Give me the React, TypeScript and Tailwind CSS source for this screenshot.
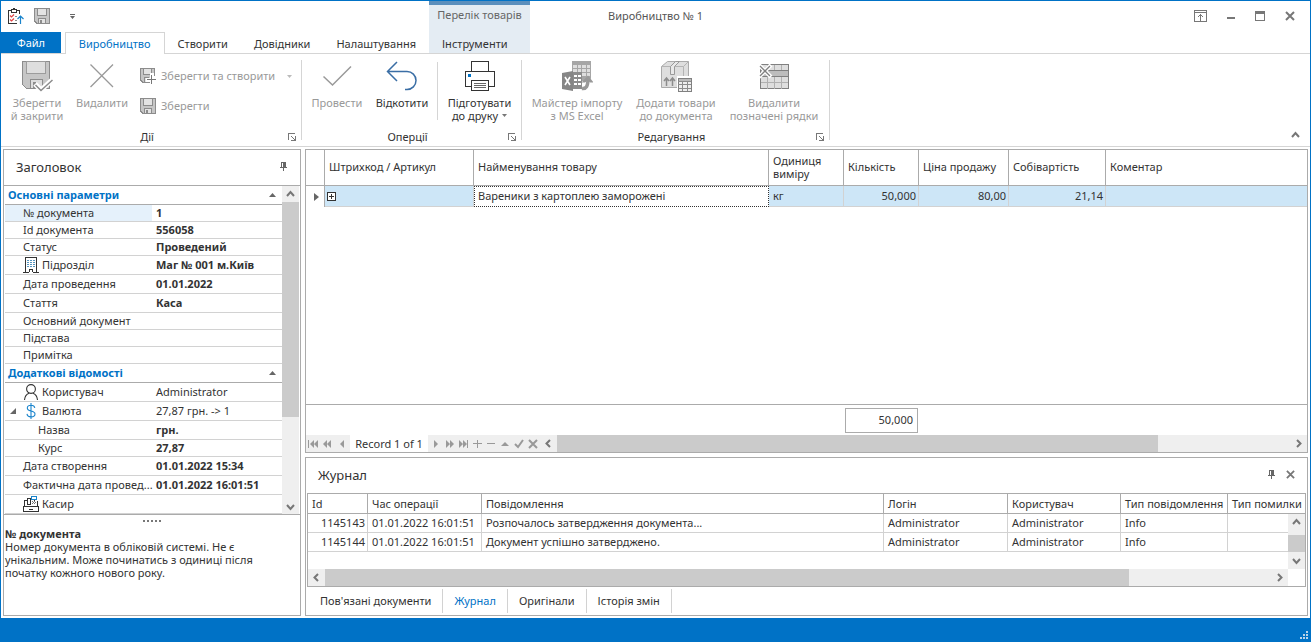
import React from 'react';
import clsx from 'clsx';

type Item = {
  name: string;
  value?: string;
  icon?: React.ReactNode;
  tall?: boolean;
  plain?: boolean;
  nested?: boolean;
  open?: boolean;
  active?: boolean;
};

const Floppy = () => (
  <svg width="16" height="16" viewBox="0 0 16 16" shapeRendering="crispEdges">
    <path d="M.5.5h15v15H3L.5 13z" fill="#c6c6c6" stroke="#8c8c8c" />
    <path d="M3.5.5h9v7h-9z" fill="#e3e3e3" stroke="#8c8c8c" />
    <path d="M4.5 10.5h7v5h-7z" fill="#e3e3e3" stroke="#8c8c8c" />
    <path d="M6 12h2v3H6z" fill="#8c8c8c" />
  </svg>
);

const FloppyPlus = () => (
  <svg width="16" height="16" viewBox="0 0 16 16" shapeRendering="crispEdges">
    <path d="M.5.5h14v14H3L.5 12z" fill="#c6c6c6" stroke="#8c8c8c" />
    <path d="M3.5.5h8v6h-8z" fill="#e3e3e3" stroke="#8c8c8c" />
    <path d="M4.5 9.5h4v5h-4z" fill="#e3e3e3" stroke="#8c8c8c" />
    <path d="M10 5h4v3h2v7h-2v1h-4v-2H6v-4h4z" fill="#fff" />
    <path d="M11 7h1v9h-1zM7 11h9v1H7z" fill="#777" />
  </svg>
);

const SaveCloseIcon = () => (
  <svg width="32" height="32" viewBox="0 0 32 32">
    <g shapeRendering="crispEdges">
      <path d="M1.5 1.5h27v27H5.5L1.5 24.5z" fill="#c6c6c6" stroke="#8c8c8c" />
      <path d="M5.5 1.5h19v12h-19z" fill="#dedede" stroke="#9c9c9c" />
      <path d="M9.5 19.5h12v9h-12z" fill="#dedede" stroke="#8c8c8c" />
      <path d="M12 22h3v6h-3z" fill="#8c8c8c" />
    </g>
    <path d="M14 24l6 6L32 19" fill="none" stroke="#fff" strokeWidth="5" />
    <path d="M14.5 25l5.5 5.5L31.5 20" fill="none" stroke="#8c8c8c" strokeWidth="1.5" />
  </svg>
);

const DeleteIcon = () => (
  <svg width="32" height="32" viewBox="0 0 32 32">
    <path d="M4.5 4.5L27 27M27 4.5L4.5 27" stroke="#999" strokeWidth="1.3" />
  </svg>
);

const CheckIcon = () => (
  <svg width="32" height="32" viewBox="0 0 32 32">
    <path d="M2.5 16.5l9 8.5L30 6.5" fill="none" stroke="#999" strokeWidth="1.5" />
  </svg>
);

const UndoIcon = () => (
  <svg width="32" height="32" viewBox="0 0 32 32">
    <path d="M11 2L1.5 11.5 11 21M2 11.5h19a9 9 0 0 1 0 18h-2" fill="none" stroke="#3a6ea5" strokeWidth="1.5" />
  </svg>
);

const PrinterIcon = () => (
  <svg width="32" height="32" viewBox="0 0 32 32" shapeRendering="crispEdges">
    <path d="M7.5 1.5h17v10h-17z" fill="#fff" stroke="#333" />
    <path d="M1.5 11.5h29v15h-29z" fill="#fff" stroke="#333" />
    <path d="M4 14h3v3H4z" fill="#0072c6" />
    <path d="M7.5 20.5h17v10h-17z" fill="#fff" stroke="#333" />
    <path d="M10 23h12v1H10zM10 25h12v1H10zM10 27h12v1H10z" fill="#666" />
  </svg>
);

const ExcelIcon = () => (
  <svg width="32" height="32" viewBox="0 0 32 32">
    <g shapeRendering="crispEdges">
      <path d="M11 1h19v20H11z" fill="#a6a6a6" />
      <path d="M12 5h4v3h-4zM17 5h3v3h-3zM21 5h4v3h-4zM26 5h3v3h-3zM12 9h4v3h-4zM17 9h3v3h-3zM21 9h4v3h-4zM26 9h3v3h-3zM21 13h4v3h-4zM26 13h3v3h-3z" fill="#dedede" />
      <path d="M12 12h9v17h-9z" fill="#8c8c8c" />
      <path d="M13 15h3v2h-3zM17 15h3v2h-3zM13 19h3v2h-3zM17 19h3v2h-3zM13 23h3v2h-3zM17 23h3v2h-3z" fill="#fff" />
    </g>
    <path d="M1 13l11-2v20L1 29z" fill="#868686" />
    <path d="M4 17l5 8M9 17l-5 8" stroke="#fff" strokeWidth="1.6" />
    <path d="M21 30c5 1 7-3 6.5-11" fill="none" stroke="#fff" strokeWidth="6" />
    <path d="M21 28.5c4 .5 6-2 6-10" fill="none" stroke="#999" strokeWidth="3.5" />
    <path d="M20.5 22.5L27 15.5l5.5 7H29l-2-2-3 2z" fill="#999" />
  </svg>
);

const BoxIcon = () => (
  <svg width="32" height="32" viewBox="0 0 32 32">
    <path d="M1.5 6.5l6-5h21v21l-5 5h-22z" fill="#dedede" stroke="#aaa" />
    <path d="M1.5 6.5h22v21M23.5 6.5l5-5" fill="none" stroke="#b4b4b4" />
    <path d="M10.5 6.5l5-5h4l-5 5v8h-4z" fill="#e8e8e8" stroke="#999" />
    <path d="M6.5 26v-8M12.5 26v-8M4 21l2.5-3L9 21M10 21l2.5-3 2.5 3" fill="none" stroke="#8c8c8c" strokeWidth="1.5" />
    <path d="M17 16h15v16H17z" fill="#fff" />
    <g shapeRendering="crispEdges">
      <path d="M18.5 18.5h13v13h-13z" fill="#eee" stroke="#808080" />
      <path d="M19 19h12v2H19z" fill="#bbb" />
      <path d="M18 21.5h13M18 24.5h13M18 28.5h13M22.5 21v10M27.5 21v10" stroke="#8c8c8c" />
    </g>
  </svg>
);

const RemoveRowsIcon = () => (
  <svg width="32" height="32" viewBox="0 0 32 32">
    <g shapeRendering="crispEdges">
      <path d="M2.5 4.5h28v24h-28z" fill="#dedede" stroke="#808080" />
      <path d="M9.5 5v5M16.5 5v5M23.5 5v5M9.5 17v12M16.5 17v12M23.5 17v12M3 22.5h27" stroke="#b0b0b0" />
      <path d="M2.5 10.5h28v6h-28z" fill="#bdbdbd" stroke="#808080" />
    </g>
    <path d="M1 5l12 12M13 5L1 17" stroke="#fff" strokeWidth="4" />
    <path d="M2 6l10 10M12 6L2 16" stroke="#808080" strokeWidth="1.3" />
  </svg>
);

const BuildingIcon = () => (
  <svg width="16" height="16" viewBox="0 0 16 16" shapeRendering="crispEdges">
    <path d="M2.5 15V.5h11V15M0 15.5h6M10 15.5h6M6.5 15v-3h3v3" fill="none" stroke="#333" />
    <path d="M4 3.5h2M7 3.5h2M10 3.5h2M4 5.5h2M7 5.5h2M10 5.5h2M4 7.5h2M7 7.5h2M10 7.5h2M4 9.5h2M7 9.5h2M10 9.5h2" stroke="#5596c0" />
  </svg>
);

const UserIcon = () => (
  <svg width="16" height="16" viewBox="0 0 16 16">
    <circle cx="8" cy="5" r="4.4" fill="none" stroke="#333" strokeWidth="1.1" />
    <path d="M1.5 16c.3-3.8 2.2-6 4.7-6.8M14.5 16c-.3-3.8-2.2-6-4.7-6.8" fill="none" stroke="#333" strokeWidth="1.1" />
  </svg>
);

const DollarIcon = () => (
  <svg width="16" height="16" viewBox="0 0 16 16">
    <path d="M11.8 4.8C11.5 3 10 2.2 8 2.2S4.3 3.2 4.3 5s1.5 2.5 3.7 3 4 1.2 4 3-1.7 2.9-4 2.9-3.8-1.2-4-3M8 0v16" fill="none" stroke="#1a84cc" strokeWidth="1.1" />
  </svg>
);

const CashIcon = () => (
  <svg width="16" height="16" viewBox="0 0 16 16" shapeRendering="crispEdges">
    <path d="M.5 10.5h15v5H.5zM1.5 10V4.5h3M4.5 8V2.5h3V8zM14.5 10V5M11 5V3" fill="none" stroke="#333" />
    <path d="M6 13h4v1H6z" fill="#333" />
    <path d="M9 5h1v1H9zM11 5h1v1h-1zM9 7h1v1H9zM11 7h1v1h-1zM10 6h1v1h-1zM12 6h1v1h-1z" fill="#777" />
    <path d="M8.5.5h5v3h-5z" fill="#fff" stroke="#1a84cc" />
  </svg>
);

const ClipboardIcon = () => (
  <svg width="16" height="16" viewBox="0 0 16 16">
    <g shapeRendering="crispEdges">
      <path d="M4 2.5H.5v13H9M8 2.5h3.5V6M3.5 4.5v-3h5v3z" fill="none" stroke="#333" />
      <path d="M5 0h2v1H5z" fill="#333" />
      <path d="M7 8h2v1H7zM7 12h2v1H7z" fill="#888" />
    </g>
    <path d="M2 7.5l1.5 1.5L6 6.5M2 11.5L3.5 13 6 10.5" fill="none" stroke="#e04343" strokeWidth="1.2" />
    <path d="M12.5 16V8M9.5 11l3-3 3 3" fill="none" stroke="#1a84cc" strokeWidth="1.2" />
  </svg>
);

const Pin = () => (
  <svg width="7" height="9" viewBox="0 0 7 9" shapeRendering="crispEdges" fill="#666">
    <path d="M1 0h5v5h1v1H4v3H3V6H0V5h1z" />
    <path d="M2 1h1v4H2z" fill="#fff" />
  </svg>
);

const Cross = ({ size = 10 }) => (
  <svg width={size} height={size} viewBox="0 0 10 10">
    <path d="M1 1l8 8M9 1L1 9" stroke="#777" strokeWidth="2" />
  </svg>
);

const chevrons = {
  up: 'M1 6l3.5-4L8 6',
  down: 'M1 3l3.5 4L8 3',
  left: 'M6 1L2.5 4.5 6 8',
  right: 'M3 1l3.5 3.5L3 8',
};

const Chevron = ({ dir }: { dir: keyof typeof chevrons }) => (
  <svg width="9" height="9" viewBox="0 0 9 9">
    <path d={chevrons[dir]} fill="none" stroke="#777" strokeWidth="2" />
  </svg>
);

const Caret = ({ color, className }: { color: string; className?: string }) => (
  <svg className={className} width="5" height="3" viewBox="0 0 5 3">
    <path d="M0 0h5L2.5 3z" fill={color} />
  </svg>
);

const items: Item[] = [
  { name: '№ документа', value: '1', active: true },
  { name: 'Id документа', value: '556058' },
  { name: 'Статус', value: 'Проведений' },
  { name: 'Підрозділ', value: 'Маг № 001 м.Київ', icon: <BuildingIcon />, tall: true },
  { name: 'Дата проведення', value: '01.01.2022', tall: true },
  { name: 'Стаття', value: 'Каса', tall: true },
  { name: 'Основний документ' },
  { name: 'Підстава' },
  { name: 'Примітка' },
];

const extraItems: Item[] = [
  { name: 'Користувач', value: 'Administrator', icon: <UserIcon />, tall: true, plain: true },
  { name: 'Валюта', value: '27,87 грн. -> 1', icon: <DollarIcon />, tall: true, plain: true, open: true },
  { name: 'Назва', value: 'грн.', tall: true, nested: true },
  { name: 'Курс', value: '27,87', nested: true },
  { name: 'Дата створення', value: '01.01.2022 15:34', tall: true },
  { name: 'Фактична дата провед...', value: '01.01.2022 16:01:51', tall: true },
  { name: 'Касир', icon: <CashIcon />, tall: true },
];

const log = [
  { id: '1145143', time: '01.01.2022 16:01:51', text: 'Розпочалось затвердження документа...' },
  { id: '1145144', time: '01.01.2022 16:01:51', text: 'Документ успішно затверджено.' },
];

const tabs = ['Створити', 'Довідники', 'Налаштування'];

const RibbonButton = ({ icon, lines, width, enabled, caret }: {
  icon: React.ReactNode; lines: string[]; width: string; enabled?: boolean; caret?: boolean;
}) => (
  <button className={clsx('flex shrink-0 flex-col items-center gap-1 leading-[13px]', width, enabled ? 'text-[#333]' : 'text-[#999]')}>
    {icon}
    <span className="whitespace-nowrap">
      {lines.map((line, i) => (
        <span key={line} className="flex items-center justify-center gap-1">
          {line}
          {caret && i === lines.length - 1 && <Caret color="#777" />}
        </span>
      ))}
    </span>
  </button>
);

const RibbonGroup = ({ title, width, children }: { title: string; width: string; children: React.ReactNode }) => (
  <section className={clsx('my-[6px] flex h-20 shrink-0 flex-col border-r border-[#d5d5d5]', width)}>
    <div className="flex flex-1">{children}</div>
    <div className="flex h-[6px] items-center pr-[5px] pl-[5px]">
      <span className="flex-1 text-center text-[#333]">{title}</span>
      <button aria-label={title}>
        <svg width="8" height="8" viewBox="0 0 8 8" shapeRendering="crispEdges">
          <path d="M.5 7V.5H7M7.5 3v4.5H3M3 3l4 4" fill="none" stroke="#777" />
        </svg>
      </button>
    </div>
  </section>
);

const PropertyRow = ({ item }: { item: Item }) => (
  <tr className={item.tall ? 'h-[19px]' : 'h-[17px]'}>
    <th scope="row" className={clsx('border-b border-[#d2d2d2] p-0 text-left font-normal', item.active && 'bg-[#e5f1fb]')}>
      <div className={clsx('flex h-4 items-center whitespace-nowrap', item.nested ? 'pl-[33px]' : item.open ? 'pl-[5px]' : 'pl-[18px]')}>
        {item.open && (
          <svg className="mr-[7px]" width="6" height="6" viewBox="0 0 6 6"><path d="M6 0v6H0z" fill="#666" /></svg>
        )}
        {item.icon && <span className="mr-[3px]">{item.icon}</span>}
        {item.name}
      </div>
    </th>
    <td className={clsx('border-b border-[#d2d2d2] p-0 pl-1 leading-4', !item.plain && 'font-bold')}>{item.value}</td>
  </tr>
);

const PropertyGroup = ({ title, rows }: { title: string; rows: Item[] }) => (
  <tbody>
    <tr className="h-[19px]">
      <th colSpan={2} className="border-b border-[#ababab] p-0 text-left text-[#0072c6]">
        <button className="flex w-full items-center justify-between pr-[6px] pl-[3px] leading-4 font-bold">
          {title}
          <svg width="7" height="4" viewBox="0 0 7 4"><path d="M0 4h7L3.5 0z" fill="#666" /></svg>
        </button>
      </th>
    </tr>
    {rows.map(item => <PropertyRow key={item.name} item={item} />)}
  </tbody>
);

const Sidebar = () => (
  <aside className="flex w-[298px] shrink-0 flex-col border border-[#ababab]">
    <header className="flex h-9 items-center justify-between border-b border-[#ababab] pr-[13px] pb-[2px] pl-3">
      <h2 className="text-[13px]">Заголовок</h2>
      <button aria-label="Закріпити"><Pin /></button>
    </header>
    <div className="flex border-b border-[#ababab] pl-px">
      <table className="w-[277px] table-fixed border-separate border-spacing-0">
        <colgroup>
          <col className="w-[147px]" />
          <col />
        </colgroup>
        <PropertyGroup title="Основні параметри" rows={items} />
        <PropertyGroup title="Додаткові відомості" rows={extraItems} />
      </table>
      <div className="mr-px flex flex-1 flex-col bg-[#efefef]">
        <button aria-label="Вгору" className="grid h-4 place-items-center"><Chevron dir="up" /></button>
        <div className="h-[215px] bg-[#cbcbcb]" />
        <button aria-label="Вниз" className="mt-auto grid h-4 place-items-center"><Chevron dir="down" /></button>
      </div>
    </div>
    <div className="flex h-3 items-center justify-center gap-[2px]">
      {[0, 1, 2, 3, 4].map(i => <span key={i} className="size-[2px] bg-[#777]" />)}
    </div>
    <div className="pr-8 pl-px leading-[13px]">
      <h3 className="font-bold">№ документа</h3>
      <p>Номер документа в обліковій системі. Не є унікальним. Може починатись з одиниці після початку кожного нового року.</p>
    </div>
  </aside>
);

const NavButton = ({ d, label, stroke }: { d: string; label: string; stroke?: boolean }) => (
  <button aria-label={label} className="grid w-[14px] place-items-center">
    <svg width="12" height="10" viewBox="0 0 12 10">
      <path d={d} fill={stroke ? 'none' : '#999'} stroke={stroke ? '#999' : 'none'} strokeWidth="2" />
    </svg>
  </button>
);

const headCell = 'border-r border-b border-[#ababab] p-0 px-1 pb-[2px] text-left font-normal leading-[13px]';
const rowCell = 'border-r border-b border-[#d2d2d2] bg-[#cde6f7] p-0 px-1';
const numCell = 'border-r border-b border-[#d2d2d2] bg-[#cde6f7] p-0 pr-[2px] text-right';

const ProductGrid = () => (
  <section className="flex flex-1 flex-col border border-[#ababab]">
    <table className="w-full table-fixed border-separate border-spacing-0">
      <colgroup>
        <col className="w-[19px]" />
        <col className="w-[149px]" />
        <col className="w-[295px]" />
        <col className="w-[75px]" />
        <col className="w-[75px]" />
        <col className="w-[90px]" />
        <col className="w-[97px]" />
        <col />
      </colgroup>
      <thead>
        <tr className="h-9">
          <th className={headCell} />
          <th className={headCell}>Штрихкод / Артикул</th>
          <th className={headCell}>Найменування товару</th>
          <th className={headCell}>Одиниця виміру</th>
          <th className={headCell}>Кількість</th>
          <th className={clsx(headCell, 'whitespace-nowrap')}>Ціна продажу</th>
          <th className={headCell}>Собівартість</th>
          <th className="border-b border-[#ababab] p-0 px-1 pb-[2px] text-left leading-[13px] font-normal">Коментар</th>
        </tr>
      </thead>
      <tbody>
        <tr className="h-[21px]">
          <td className="border-r border-[#ababab] p-0 pl-2">
            <svg width="5" height="8" viewBox="0 0 5 8"><path d="M0 0l5 4-5 4z" fill="#666" /></svg>
          </td>
          <td className="border-r border-b border-[#d2d2d2] bg-[#cde6f7] p-0 pl-[2px]">
            <button aria-label="Розгорнути" className="block">
              <svg width="9" height="9" viewBox="0 0 9 9" shapeRendering="crispEdges">
                <path d="M.5.5h8v8h-8z" fill="#fff" stroke="#333" />
                <path d="M4 2h1v5H4zM2 4h5v1H2z" fill="#333" />
              </svg>
            </button>
          </td>
          <td className="border border-dotted border-[#333] p-0 px-[3px] pb-[2px] leading-4">Вареники з картоплею заморожені</td>
          <td className={rowCell}>кг</td>
          <td className={numCell}>50,000</td>
          <td className={numCell}>80,00</td>
          <td className={numCell}>21,14</td>
          <td className="border-b border-[#d2d2d2] bg-[#cde6f7] p-0" />
        </tr>
      </tbody>
    </table>
    <div className="mt-auto flex h-[31px] items-start border-t border-[#ababab] pt-[3px] pl-[539px]">
      <output className="w-[73px] border border-[#ababab] pr-1 pb-[2px] text-right leading-[21px]">50,000</output>
    </div>
    <div className="flex h-[17px] bg-[#efefef]">
      <div className="flex items-stretch">
        <NavButton label="Перший" d="M1 1h1v8H1zM7 1v8L3 5zM11 1v8L7 5z" />
        <NavButton label="Попередня сторінка" d="M6 1v8L2 5zM10 1v8L6 5z" />
        <NavButton label="Попередній" d="M9 1v8L5 5z" />
      </div>
      <span className="ml-[2px] w-[78px] bg-white text-center leading-[17px]">Record 1 of 1</span>
      <div className="flex items-stretch">
        <NavButton label="Наступний" d="M5 1v8l4-4z" />
        <NavButton label="Наступна сторінка" d="M3 1v8l4-4zM7 1v8l4-4z" />
        <NavButton label="Останній" d="M2 1v8l4-4zM6 1v8l4-4zM10 1h1v8h-1z" />
        <NavButton label="Додати" d="M6 1h1v8H6zM2 4h9v1H2z" />
        <NavButton label="Вилучити" d="M2 4h8v1H2z" />
        <NavButton label="Змінити" d="M2 7h8L6 3z" />
        <NavButton label="Застосувати" stroke d="M2 5l3 3 5-7" />
        <NavButton label="Скасувати" stroke d="M2 1l8 8M10 1L2 9" />
      </div>
      <button aria-label="Ліворуч" className="grid w-[17px] place-items-center"><Chevron dir="left" /></button>
      <div className="flex flex-1"><div className="w-[82%] bg-[#cbcbcb]" /></div>
      <button aria-label="Праворуч" className="grid w-[17px] place-items-center"><Chevron dir="right" /></button>
    </div>
  </section>
);

const logHead = 'h-5 border-r border-b border-[#ababab] p-0 px-1 text-left font-normal';
const logCell = 'h-[19px] border-r border-b border-[#d2d2d2] p-0 px-1 leading-4';

const Journal = () => (
  <section className="flex flex-col border border-[#ababab]">
    <header className="flex h-[35px] items-center justify-between pr-3 pb-[2px] pl-3">
      <h2 className="text-[13px]">Журнал</h2>
      <div className="flex items-center gap-[11px]">
        <button aria-label="Закріпити"><Pin /></button>
        <button aria-label="Закрити"><Cross size={9} /></button>
      </div>
    </header>
    <div className="relative mx-px border border-[#ababab]">
      <table className="w-full table-fixed border-separate border-spacing-0 whitespace-nowrap">
        <colgroup>
          <col className="w-[60px]" />
          <col className="w-[114px]" />
          <col />
          <col className="w-[124px]" />
          <col className="w-[113px]" />
          <col className="w-[107px]" />
          <col className="w-[77px]" />
        </colgroup>
        <thead>
          <tr>
            <th className={logHead}>Id</th>
            <th className={logHead}>Час операції</th>
            <th className={logHead}>Повідомлення</th>
            <th className={logHead}>Логін</th>
            <th className={logHead}>Користувач</th>
            <th className={logHead}>Тип повідомлення</th>
            <th className="border-b border-[#ababab] p-0 pl-1 text-left font-normal">Тип помилки</th>
          </tr>
        </thead>
        <tbody>
          {log.map(row => (
            <tr key={row.id}>
              <td className="h-[19px] border-r border-b border-[#d2d2d2] p-0 pr-[2px] text-right leading-4">{row.id}</td>
              <td className={logCell}>{row.time}</td>
              <td className={logCell}>{row.text}</td>
              <td className={logCell}>Administrator</td>
              <td className={logCell}>Administrator</td>
              <td className={logCell}>Info</td>
              <td className="border-b border-[#d2d2d2] p-0" />
            </tr>
          ))}
        </tbody>
      </table>
      <div className="absolute top-5 right-0 bottom-[17px] flex w-[17px] flex-col bg-[#efefef]">
        <button aria-label="Вгору" className="grid h-[17px] place-items-center"><Chevron dir="up" /></button>
        <div className="mt-1 h-[17px] bg-[#cbcbcb]" />
        <button aria-label="Вниз" className="grid h-[17px] place-items-center"><Chevron dir="down" /></button>
      </div>
      <div className="mt-[17px] mr-[17px] flex h-[17px] bg-[#efefef]">
        <button aria-label="Ліворуч" className="grid w-[17px] place-items-center"><Chevron dir="left" /></button>
        <div className="flex flex-1"><div className="w-[85%] bg-[#cbcbcb]" /></div>
        <button aria-label="Праворуч" className="grid w-[17px] place-items-center"><Chevron dir="right" /></button>
      </div>
    </div>
    <nav className="flex py-[2px] pl-[3px] leading-6">
      {["Пов'язані документи", 'Журнал', 'Оригінали', 'Історія змін'].map(tab => (
        <button key={tab} className={clsx('border-r border-[#d2d2d2] px-[11px]', tab === 'Журнал' && 'text-[#0072c6]')}>{tab}</button>
      ))}
    </nav>
  </section>
);

export default function App() {
  return (
    <div className="flex min-h-screen flex-col border-x border-t border-[#0072c6] bg-white font-['Noto_Sans','Open_Sans',sans-serif] text-[11px] leading-4 text-[#333]">
      <header>
        <div className="grid h-[31px] grid-cols-[1fr_auto_1fr]">
          <div className="flex">
            <div className="flex w-[428px] items-center pb-px pl-[7px]">
              <ClipboardIcon />
              <button aria-label="Зберегти" className="ml-[10px]"><Floppy /></button>
              <button aria-label="Налаштувати панель" className="ml-5">
                <svg width="5" height="5" viewBox="0 0 5 5" fill="#666"><path d="M0 0h5v1H0zM0 2h5L2.5 5z" /></svg>
              </button>
            </div>
            <div className="w-[101px] border-t-4 border-[#5b8fbd] bg-[#e4ecf3] text-center leading-5 text-[#666]">Перелік товарів</div>
          </div>
          <h1 className="leading-[29px] text-[#555]">Виробництво № 1</h1>
          <div className="flex items-center justify-end gap-5 pr-[15px] pb-px">
            <button aria-label="Стрічка">
              <svg width="13" height="12" viewBox="0 0 13 12" shapeRendering="crispEdges">
                <path d="M.5.5h12v11H.5zM1 2.5h11M6.5 4v7M4 6.5h1M8 6.5h1M5 5.5h3" fill="none" stroke="#777" />
              </svg>
            </button>
            <button aria-label="Згорнути"><span className="mt-1 block h-[2px] w-2 bg-[#777]" /></button>
            <button aria-label="Розгорнути"><span className="block h-[10px] w-[10px] border border-t-[3px] border-[#777]" /></button>
            <button aria-label="Закрити"><Cross /></button>
          </div>
        </div>
        <nav className="flex h-[22px] border-b border-[#d5d5d5] leading-5">
          <div className="flex w-[428px] shrink-0">
            <button className="w-[62px] bg-[#0072c6] text-white">Файл</button>
            <button className="-mb-px ml-1 border border-b-0 border-[#d5d5d5] bg-white px-[13px] text-[#0072c6]">Виробництво</button>
            {tabs.map(tab => <button key={tab} className="px-[13px] pt-[2px]">{tab}</button>)}
          </div>
          <button className="w-[101px] bg-[#e4ecf3] pt-[2px] pl-[13px] text-left">Інструменти</button>
        </nav>
      </header>

      <div className="flex border-b border-[#d5d5d5]">
        <RibbonGroup title="Дії" width="w-[301px]">
          <div className="flex pl-1">
            <RibbonButton icon={<SaveCloseIcon />} lines={['Зберегти', 'й закрити']} width="w-16" />
            <RibbonButton icon={<DeleteIcon />} lines={['Видалити']} width="w-[66px]" />
          </div>
          <div className="flex flex-1 flex-col pt-px pl-[5px] text-[#999]">
            <button className="flex h-[30px] items-center gap-[5px] pr-[9px]">
              <FloppyPlus />
              Зберегти та створити
              <Caret color="#bbb" className="ml-auto" />
            </button>
            <button className="flex h-[30px] items-center gap-[5px]"><Floppy />Зберегти</button>
          </div>
        </RibbonGroup>
        <RibbonGroup title="Оперції" width="w-[220px]">
          <div className="flex pl-[3px]">
            <RibbonButton icon={<CheckIcon />} lines={['Провести']} width="w-16" />
            <RibbonButton icon={<UndoIcon />} lines={['Відкотити']} width="w-[66px]" enabled />
          </div>
          <div className="mt-[2px] mb-[14px] ml-[2px] border-l border-[#d5d5d5]" />
          <RibbonButton icon={<PrinterIcon />} lines={['Підготувати', 'до друку']} width="w-[83px]" enabled caret />
        </RibbonGroup>
        <RibbonGroup title="Редагування" width="w-[308px]">
          <div className="flex pl-[6px]">
            <RibbonButton icon={<ExcelIcon />} lines={['Майстер імпорту', 'з MS Excel']} width="w-[98px]" />
            <RibbonButton icon={<BoxIcon />} lines={['Додати товари', 'до документа']} width="w-[100px]" />
            <RibbonButton icon={<RemoveRowsIcon />} lines={['Видалити', 'позначені рядки']} width="w-24" />
          </div>
        </RibbonGroup>
        <button aria-label="Згорнути стрічку" className="mt-auto mr-[10px] mb-[6px] ml-auto"><Chevron dir="up" /></button>
      </div>

      <main className="flex flex-1 gap-1 px-[2px] py-[2px]">
        <Sidebar />
        <div className="flex min-w-0 flex-1 flex-col gap-1">
          <ProductGrid />
          <Journal />
        </div>
      </main>

      <footer className="flex h-6 items-end justify-end bg-[#0072c6] pr-[2px] pb-[3px]">
        <svg width="8" height="8" viewBox="0 0 8 8" shapeRendering="crispEdges" fill="#b9d3e8">
          <path d="M6 0h2v2H6zM6 3h2v2H6zM3 3h2v2H3zM6 6h2v2H6zM3 6h2v2H3zM0 6h2v2H0z" />
        </svg>
      </footer>
    </div>
  );
}
